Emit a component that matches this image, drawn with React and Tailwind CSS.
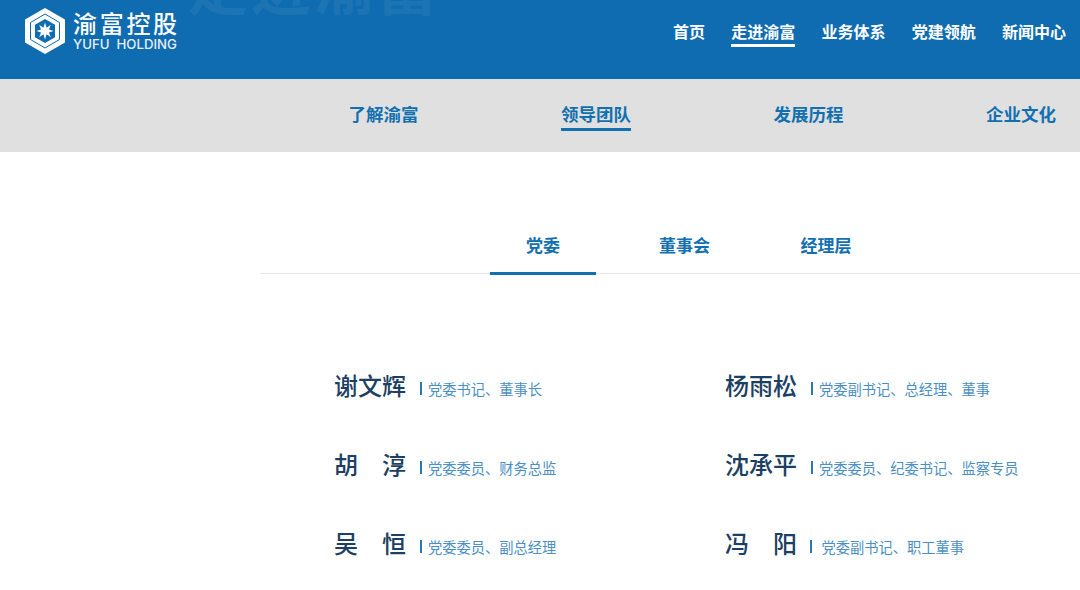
import React from 'react';

const FONT = 'font-["Noto_Sans_CJK_SC","Noto_Sans",sans-serif]';

const NAV = ['首页', '走进渝富', '业务体系', '党建领航', '新闻中心'];
const SUB_NAV = ['了解渝富', '领导团队', '发展历程', '企业文化'];
const TABS = ['党委', '董事会', '经理层'];
const LEADERS = [
  { name: '谢文辉', title: '党委书记、董事长' },
  { name: '杨雨松', title: '党委副书记、总经理、董事' },
  { name: '胡淳', title: '党委委员、财务总监' },
  { name: '沈承平', title: '党委委员、纪委书记、监察专员' },
  { name: '吴恒', title: '党委委员、副总经理' },
  { name: '冯阳', title: '党委副书记、职工董事' },
];

function Logo() {
  return (
    <svg width="44" height="48" viewBox="0 0 44 48" className="shrink-0">
      <path d="M22 1 L42 12.5 V35.5 L22 47 L2 35.5 V12.5 Z" fill="#fff" />
      <path d="M22 7 L36.5 15.5 V32.5 L22 41 L7.5 32.5 V15.5 Z" fill="#fff" stroke="#0f6cb0" strokeWidth="1" />
      <path d="M22 12 L32 17.8 V30.2 L22 36 L12 30.2 V17.8 Z" fill="#0f6cb0" />
      <path d="M22 15.5 L23.6 20.8 L27.8 17.8 L26 22.4 L30.5 24 L26 25.6 L27.8 30.2 L23.6 27.2 L22 32.5 L20.4 27.2 L16.2 30.2 L18 25.6 L13.5 24 L18 22.4 L16.2 17.8 L20.4 20.8 Z" fill="#fff" />
    </svg>
  );
}

export default function App() {
  return (
    <div className={`w-[1080px] h-[590px] overflow-hidden bg-white ${FONT}`}>
      {/* Header */}
      <header className="relative h-[79px] bg-[#0f6cb0] overflow-hidden flex items-start justify-between pl-[23px] pr-[14px]">
        <div className="absolute left-[188px] top-[-46px] text-[60px] leading-none font-bold tracking-[3px] text-white/[0.06] whitespace-nowrap">
          走进渝富
        </div>
        <div className="relative flex items-center gap-[6px] pt-[7px]">
          <Logo />
          <div className="text-white">
            <div className="text-[24px] leading-[25px] tracking-[2.7px] font-medium whitespace-nowrap">渝富控股</div>
            <div className="mt-[2px] text-[13.2px] leading-[15px] font-medium whitespace-pre font-['Inter',sans-serif] opacity-90">YUFU  HOLDING</div>
          </div>
        </div>
        <nav className="relative flex gap-[26.25px] pt-[20px]">
          {NAV.map((item) => (
            <a
              key={item}
              className={`text-[16px] leading-[23px] font-bold text-white pb-[1px] border-b-[3px] ${
                item === '走进渝富' ? 'border-white' : 'border-transparent'
              }`}
            >
              {item}
            </a>
          ))}
        </nav>
      </header>

      {/* Sub nav */}
      <div className="h-[73px] bg-[#e0e0e0] flex items-center gap-[142.5px] pl-[348.5px] pb-[1px]">
        {SUB_NAV.map((item) => (
          <a
            key={item}
            className={`text-[17.5px] leading-[26px] font-bold text-[#1270b0] whitespace-nowrap border-b-[3px] pb-[1px] mt-[2px] ${
              item === '领导团队' ? 'border-[#1270b0]' : 'border-transparent'
            }`}
          >
            {item}
          </a>
        ))}
      </div>

      {/* Tabs */}
      <div className="ml-[260px] mt-[63px] h-[59px] border-b border-[#e5e7eb] flex gap-[35.5px] pl-[230px]">
        {TABS.map((tab) => (
          <div
            key={tab}
            className={`w-[106px] h-[60px] shrink-0 text-center text-[17px] leading-[60px] font-bold text-[#1270b0] ${
              tab === '党委' ? 'border-b-[3px] border-[#1270b0]' : ''
            }`}
          >
            {tab}
          </div>
        ))}
      </div>

      {/* Leaders */}
      <div className="grid grid-cols-[391px_1fr] auto-rows-[79px] pl-[334px] pt-[71px]">
        {LEADERS.map((p) => (
          <div key={p.name} className="flex items-center h-[79px]">
            <span className="w-[72px] text-[24px] leading-[36px] font-medium text-[#1c3f63] text-justify [text-align-last:justify]">
              {p.name}
            </span>
            <span className={`w-[2.5px] h-[13px] bg-[#2a7ab5] mt-[8px] shrink-0 ${p.name === '冯阳' ? 'ml-[12.5px] mr-[9.5px]' : 'ml-[13.5px] mr-[6px]'}`} />
            <span className="text-[14.25px] leading-[20px] mt-[9px] text-[#4b8fc4] whitespace-nowrap">{p.title}</span>
          </div>
        ))}
      </div>
    </div>
  );
}
